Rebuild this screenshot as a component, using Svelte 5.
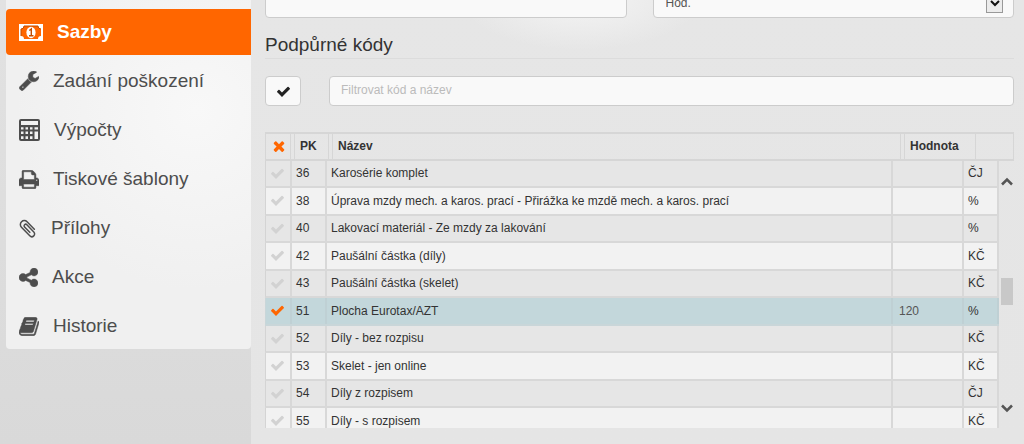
<script>
  const menu = [
    { id: 'money', label: 'Sazby', width: 24, active: true },
    { id: 'wrench', label: 'Zadání poškození', width: 20 },
    { id: 'calc', label: 'Výpočty', width: 21 },
    { id: 'print', label: 'Tiskové šablony', width: 20 },
    { id: 'clip', label: 'Přílohy', width: 18 },
    { id: 'share', label: 'Akce', width: 19 },
    { id: 'book', label: 'Historie', width: 20 }
  ];

  const paths = {
    check: 'M1671 566q0 40-28 68l-724 724-136 136q-28 28-68 28t-68-28l-136-136-362-362q-28-28-28-68t28-68l136-136q28-28 68-28t68 28l294 295 656-657q28-28 68-28t68 28l136 136q28 28 28 68z',
    times: 'M1490 1322q0 40-28 68l-136 136q-28 28-68 28t-68-28l-294-294-294 294q-28 28-68 28t-68-28l-136-136q-28-28-28-68t28-68l294-294-294-294q-28-28-28-68t28-68l136-136q28-28 68-28t68 28l294 294 294-294q28-28 68-28t68 28l136 136q28 28 28 68t-28 68l-294 294 294 294q28 28 28 68z',
    wrench: 'M448 1472q0-26-19-45t-45-19-45 19-19 45 19 45 45 19 45-19 19-45zm644-420l-682 682q-37 37-90 37-52 0-91-37l-106-108q-38-36-38-90 0-53 38-91l681-681q39 98 114.5 173.5t173.5 114.5zm634-435q0 39-23 106-47 134-164.5 217.5t-258.5 83.5q-185 0-316.5-131.5t-131.5-316.5 131.5-316.5 316.5-131.5q58 0 121.5 16.5t107.5 46.5q16 11 16 28t-16 28l-293 169v224l193 107q5-3 79-48.5t135.5-81 70.5-35.5q15 0 23.5 10t8.5 25z',
    print: 'M448 1536h896v-256h-896v256zm0-640h896v-384h-160q-40 0-68-28t-28-68v-160h-640v640zm1152 64q0-26-19-45t-45-19-45 19-19 45 19 45 45 19 45-19 19-45zm128 0v416q0 13-9.5 22.5t-22.5 9.5h-224v160q0 40-28 68t-68 28h-960q-40 0-68-28t-28-68v-160h-224q-13 0-22.5-9.5t-9.5-22.5v-416q0-79 56.5-135.5t135.5-56.5h64v-544q0-40 28-68t68-28h672q40 0 88 20t76 48l152 152q28 28 48 76t20 88v256h64q79 0 135.5 56.5t56.5 135.5z',
    share: 'M1344 1024q133 0 226.5 93.5t93.5 226.5-93.5 226.5-226.5 93.5-226.5-93.5-93.5-226.5q0-12 2-34l-360-180q-92 86-218 86-133 0-226.5-93.5t-93.5-226.5 93.5-226.5 226.5-93.5q126 0 218 86l360-180q-2-22-2-34 0-133 93.5-226.5t226.5-93.5 226.5 93.5 93.5 226.5-93.5 226.5-226.5 93.5q-126 0-218-86l-360 180q2 22 2 34t-2 34l360 180q92-86 218-86z',
    book: 'M1703 478q40 57 18 129l-275 906q-19 64-76.5 107.5t-122.5 43.5h-923q-77 0-148.5-53.5t-99.5-131.5q-24-67-2-127 0-4 3-27t4-37q1-8-3-21.5t-3-19.5q2-11 8-21t16.5-23.5 16.5-23.5q23-38 45-91.5t30-91.5q3-10 .5-30t-.5-28q3-11 17-28t17-23q21-36 42-92t25-90q1-9-2.5-32t.5-28q4-13 22-30.5t22-22.5q19-26 42.5-84.5t27.5-96.5q1-8-3-25.5t-2-26.5q2-8 9-18t18-23 17-21q8-12 16.5-30.5t15-35 16-36 19.5-32 26.5-23.5 36-11.5 47.5 5.5l-1 3q38-9 51-9h761q74 0 114 56t18 130l-274 906q-36 119-71.5 153.5t-128.5 34.5h-869q-27 0-38 15-11 16-1 43 24 70 144 70h923q29 0 56-15.5t35-41.5l300-987q7-22 5-57 38 15 59 43zm-1064 2q-4 13 2 22.5t20 9.5h608q13 0 25.5-9.5t16.5-22.5l21-64q4-13-2-22.5t-20-9.5h-608q-13 0-25.5 9.5t-16.5 22.5zm-83 256q-4 13 2 22.5t20 9.5h608q13 0 25.5-9.5t16.5-22.5l21-64q4-13-2-22.5t-20-9.5h-608q-13 0-25.5 9.5t-16.5 22.5z'
  };

  const boxes = {
    wrench: '64 128 1664 1664',
    print: '64 128 1664 1536',
    share: '128 128 1536 1536',
    book: '64 128 1664 1536'
  };

  let rows = $state([
    { pk: 36, name: 'Karosérie komplet', value: '', unit: 'ČJ' },
    { pk: 38, name: 'Úprava mzdy mech. a karos. prací - Přirážka ke mzdě mech. a karos. prací', value: '', unit: '%' },
    { pk: 40, name: 'Lakovací materiál - Ze mzdy za lakování', value: '', unit: '%' },
    { pk: 42, name: 'Paušální částka (díly)', value: '', unit: 'KČ' },
    { pk: 43, name: 'Paušální částka (skelet)', value: '', unit: 'KČ' },
    { pk: 51, name: 'Plocha Eurotax/AZT', value: '120', unit: '%', on: true },
    { pk: 52, name: 'Díly - bez rozpisu', value: '', unit: 'KČ' },
    { pk: 53, name: 'Skelet - jen online', value: '', unit: 'KČ' },
    { pk: 54, name: 'Díly z rozpisem', value: '', unit: 'ČJ' },
    { pk: 55, name: 'Díly - s rozpisem', value: '', unit: 'KČ' }
  ]);
  let filter = $state('');
  const shown = $derived(
    rows.filter((r) => `${r.pk} ${r.name}`.toLowerCase().includes(filter.toLowerCase()))
  );
</script>

{#snippet mark(d, size)}
  <svg width={size} height={size} viewBox="0 0 1792 1792" fill="currentColor" aria-hidden="true"><path {d} /></svg>
{/snippet}

<div class="page">
  <aside>
    <nav>
      {#each menu as item}
        <a href="#{item.id}" class:active={item.active}>
          {#if item.id === 'money'}
            <svg width={item.width} height="17" viewBox="0 0 24 17" aria-hidden="true">
              <path fill="#fff" fill-rule="evenodd" d="M0 0h24v17H0zM5 2A3 3 0 0 1 2 5v7a3 3 0 0 1 3 3h14a3 3 0 0 1 3-3V5a3 3 0 0 1-3-3z" />
              <path d="M5 2A3 3 0 0 1 2 5v7M5 2h14a3 3 0 0 0 3 3" fill="none" stroke="#c24c00" stroke-width="1" />
              <ellipse cx="12" cy="8.500" rx="4.600" ry="5.800" fill="#fff" />
              <path d="M10.300 6.500 12.300 5v6.500M10 11.700h4.500" fill="none" stroke="#c24c00" stroke-width="1.400" />
            </svg>
          {:else if item.id === 'calc'}
            <svg width={item.width} height="22" viewBox="0 0 21 22" aria-hidden="true">
              <path fill="currentColor" fill-rule="evenodd" d="M2 0h17a2 2 0 0 1 2 2v18a2 2 0 0 1-2 2H2a2 2 0 0 1-2-2V2a2 2 0 0 1 2-2zM2 2v4h17V2zM2 8.200v2.200h2.500V8.200zM6.500 8.200v2.200h2.500V8.200zM11 8.200v2.200h2.500V8.200zM15.500 8.200v2.200H19V8.200zM2 12.500v2.500h2.500v-2.500zM6.500 12.500v2.500h2.500v-2.500zM11 12.500v2.500h2.500v-2.500zM15.500 12.500V20H19v-7.500zM2 17.200V20h2.500v-2.800zM6.500 17.200V20h2.500v-2.800zM11 17.200V20h2.500v-2.800z" />
            </svg>
          {:else if item.id === 'clip'}
            <svg width={item.width} height="19" viewBox="0 0 18 19" aria-hidden="true">
              <path transform="translate(9 9.500) rotate(46)" fill="none" stroke="currentColor" stroke-width="1.500" stroke-linecap="round" d="M5-4H-5.500a3.900 3.900 0 0 0 0 7.800H6.500a2.800 2.800 0 0 0 0-5.600H-3.500a1.600 1.600 0 0 0 0 3.200H4" />
            </svg>
          {:else}
            <svg class="glyph" width={item.width} height={item.id === 'wrench' ? 20 : 19} viewBox={boxes[item.id]} aria-hidden="true">
              <path d={paths[item.id]} />
            </svg>
          {/if}
          <span>{item.label}</span>
        </a>
      {/each}
    </nav>
  </aside>

  <main>
    <div class="fields">
      <input type="text" aria-label="Hodnota" />
      <div class="select">
        <select aria-label="Jednotka"><option>Hod.</option></select>
        <span class="drop">
          <svg width="10" height="7" viewBox="0 0 10 7" aria-hidden="true"><path d="M1 1l4 4 4-4" fill="none" stroke="#111" stroke-width="2" /></svg>
        </span>
      </div>
    </div>

    <h2>Podpůrné kódy</h2>

    <div class="filter">
      <button type="button" aria-label="Vybrané">{@render mark(paths.check, 15)}</button>
      <input type="text" bind:value={filter} placeholder="Filtrovat kód a název" aria-label="Filtrovat kód a název" />
    </div>

    <div class="grid">
      <table>
        <thead>
          <tr>
            <th class="clear">{@render mark(paths.times, 16)}</th>
            <th>PK</th>
            <th>Název</th>
            <th>Hodnota</th>
            <th></th>
          </tr>
        </thead>
        <tbody>
          {#each shown as row}
            <tr class:on={row.on}>
              <td>
                <button type="button" class="tick" aria-label="Vybrat {row.pk}" aria-pressed={!!row.on} onclick={() => (row.on = !row.on)}>
                  {@render mark(paths.check, 15)}
                </button>
              </td>
              <td>{row.pk}</td>
              <td>{row.name}</td>
              <td class="value">{row.value}</td>
              <td>{row.unit}</td>
            </tr>
          {/each}
        </tbody>
      </table>
      <div class="scroll" aria-hidden="true">
        <svg width="12" height="9" viewBox="0 0 12 9"><path d="M1 7.500l5-5 5 5" /></svg>
        <div class="track"><div class="thumb"></div></div>
        <svg width="12" height="9" viewBox="0 0 12 9"><path d="M1 1.500l5 5 5-5" /></svg>
      </div>
    </div>
  </main>
</div>

<style>
  :global(body) {
    margin: 0;
  }
  .page {
    display: grid;
    grid-template-columns: minmax(220px, 251fr) 773fr;
    height: 100vh;
    overflow: hidden;
    box-sizing: border-box;
    background: #e6e6e6;
    color: #333;
    font: 12px/18px "Liberation Sans", Arial, sans-serif;
  }
  aside {
    padding-left: 6px;
    background: linear-gradient(#e2e2e2, #d9d9d9);
  }
  nav {
    display: flex;
    flex-direction: column;
    gap: 3px;
    padding-top: 9px;
    border-radius: 0 0 4px 4px;
    background: radial-gradient(circle at 190px 110px, #f8f8f8, #f0f0f0 180px);
  }
  nav a {
    display: flex;
    align-items: center;
    gap: 14px;
    height: 46px;
    padding-left: 13px;
    color: #4d4d4d;
    font-size: 19px;
    text-decoration: none;
  }
  nav a.active {
    border-radius: 4px 0 0 4px;
    background: #ff6600;
    color: #fff;
    font-weight: bold;
  }
  nav svg {
    flex: none;
  }
  .glyph {
    fill: currentColor;
    stroke: currentColor;
    stroke-width: 40;
  }
  main {
    display: flex;
    flex-direction: column;
    min-width: 0;
    min-height: 0;
    padding: 0 10px 16px 14px;
    background: radial-gradient(ellipse 120px 50px at 330px 0, #f4f4f4, transparent), linear-gradient(#e6e6e6, #e5e5e5);
  }
  input,
  select,
  .filter button {
    box-sizing: border-box;
    height: 30px;
    margin: 0;
    border: 1px solid #ccc;
    border-radius: 4px;
    background: #f9f9f9;
    color: #555;
    font: inherit;
  }
  input,
  select {
    width: 100%;
    padding: 0 11px;
  }
  .fields {
    display: grid;
    grid-template-columns: 1fr 1fr;
    gap: 26px;
    margin-top: -12px;
  }
  .select {
    position: relative;
  }
  select {
    display: block;
    padding: 0 12px;
    appearance: none;
  }
  .drop {
    position: absolute;
    top: 6px;
    right: 11px;
    display: grid;
    place-items: center;
    box-sizing: border-box;
    width: 17px;
    height: 19px;
    border: 1px solid #999;
    background: #ececec;
    pointer-events: none;
  }
  h2 {
    margin: 14px 0 17px;
    padding-bottom: 1px;
    border-bottom: 1px solid #dcdcdc;
    font-size: 19px;
    font-weight: normal;
    line-height: 25px;
  }
  .filter {
    display: grid;
    grid-template-columns: 36px 1fr;
    gap: 28px;
    margin-bottom: 26px;
  }
  .filter button {
    display: grid;
    place-items: center;
    padding: 0;
    color: #222;
  }
  .filter input {
    padding-bottom: 2px;
  }
  input::placeholder {
    color: #bbb;
    opacity: 1;
  }
  .grid {
    position: relative;
    display: flex;
    flex: 1;
    min-height: 0;
  }
  table {
    display: flex;
    flex-direction: column;
    width: 100%;
    min-height: 0;
  }
  thead,
  tbody {
    display: block;
  }
  tbody {
    flex: 1;
    min-height: 0;
    margin-right: 15px;
    overflow: hidden;
  }
  tr {
    display: grid;
    box-sizing: border-box;
    border-left: 1px solid #d4d4d4;
  }
  thead tr {
    grid-template-columns: 25px 35px 1fr 68px 38px;
    column-gap: 3px;
    height: 29px;
    border: 1px solid #d6d6d6;
    border-width: 2px 1px 2px 1px;
  }
  tbody tr {
    grid-template-columns: 26px 35px 1fr 71px 35px;
    height: 27px;
    border-bottom: 2px solid #d8d8d8;
    background: #e6e6e6;
  }
  tbody tr:nth-child(even) {
    height: 28px;
    background: #f2f2f2;
  }
  tbody tr.on,
  tbody tr.on:nth-child(even) {
    border-color: #c9d6d9;
    background: #c3d7db;
  }
  th,
  td {
    display: flex;
    align-items: center;
    min-width: 0;
    padding: 0 0 1px 4px;
    border-right: 2px solid #d8d8d8;
    white-space: nowrap;
  }
  th {
    padding-left: 5px;
    border-right: 1px solid #d6d6d6;
    text-align: left;
  }
  th:nth-child(n + 2) {
    border-left: 1px solid #d6d6d6;
  }
  th:nth-child(n + 4) {
    border-right: 0;
  }
  tbody tr.on td {
    border-color: #bfd0d4;
  }
  td.value {
    padding-left: 6px;
    color: #555;
  }
  .clear {
    color: #ff6600;
  }
  .tick {
    display: grid;
    padding: 0;
    border: 0;
    background: none;
    color: #d2d2d2;
  }
  .on .tick {
    color: #ff6600;
  }
  .scroll {
    position: absolute;
    top: 45px;
    right: 1px;
    bottom: 15px;
    display: flex;
    flex-direction: column;
    align-items: center;
    width: 12px;
  }
  .scroll path {
    fill: none;
    stroke: #555;
    stroke-width: 2.500;
  }
  .track {
    display: flex;
    flex: 1;
    flex-direction: column;
    width: 100%;
  }
  .track::before {
    flex: 91;
    content: "";
  }
  .track::after {
    flex: 97;
    content: "";
  }
  .thumb {
    height: 27px;
    background: #c8c8c8;
  }
</style>
